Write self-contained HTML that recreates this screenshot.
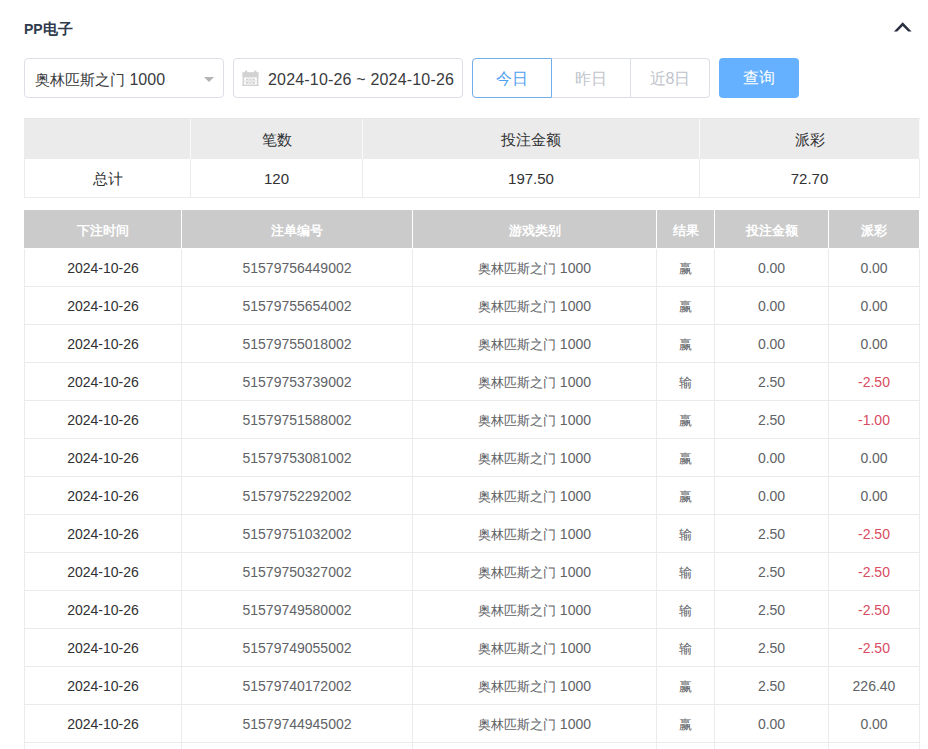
<!DOCTYPE html>
<html><head><meta charset="utf-8">
<style>
*{box-sizing:border-box;margin:0;padding:0}
html,body{width:928px;height:749px;overflow:hidden;background:#fff;font-family:"Liberation Sans",sans-serif;}
.abs{position:absolute}
.title{left:24px;top:19px;font-size:14px;font-weight:bold;color:#2f3a4d;line-height:20px}
.chev{left:892px;top:20px;width:22px;height:14px}
.sel{left:24px;top:58px;width:200px;height:40px;border:1px solid #dcdfe6;border-radius:4px;}
.sel .txt{position:absolute;left:10px;top:2px;line-height:38px;font-size:16px;color:#3a3b3e;white-space:nowrap}
.sel .arr{position:absolute;left:179px;top:18px;width:0;height:0;border-left:5px solid transparent;border-right:5px solid transparent;border-top:5px solid #b4b4b4}
.date{left:233px;top:58px;width:230px;height:40px;border:1px solid #dcdfe6;border-radius:4px;}
.date .txt{position:absolute;left:34px;top:2px;line-height:38px;font-size:16px;letter-spacing:0.18px;color:#3a3b3e;white-space:nowrap}
.date svg{position:absolute;left:8px;top:11px}
.rb{top:58px;height:40px;border:1px solid #dcdfe6;border-left:0;font-size:16px;line-height:40px;text-align:center;color:#c0c4cc;background:#fff}
.rb.on{border:1px solid #72aee8;color:#4fa0f0;border-radius:4px 0 0 4px}
.rb.last{border-radius:0 4px 4px 0}
.q{left:719px;top:58px;width:80px;height:40px;background:#66b1ff;border-radius:4px;color:#fff;font-size:16px;line-height:40px;text-align:center}
.cj{font-size:15px}
.sum{left:24px;top:118px;width:896px}
.sum .hd{display:flex;height:41px;background:#ebebeb;border-top:1px solid #e6e6e6}
.sum .hd div{height:40px;line-height:42px;text-align:center;font-size:15px;color:#303133;border-right:1px solid #fafafa}
.sum .bd{display:flex;height:39px}
.sum .bd div{height:39px;line-height:40px;text-align:center;font-size:15px;color:#303133;border-right:1px solid #ebebee;border-bottom:1px solid #ebebee}
.sum .s1{width:167px}.sum .s2{width:172px}.sum .s3{width:337px}.sum .s4{width:220px}
.sum .bd .s1{border-left:1px solid #ebebee}
.det{left:24px;top:210px;width:896px}
.det .hd{display:flex;height:39px;background:#fff}
.det .hd div{height:38px;line-height:41px;text-align:center;font-size:13px;font-weight:bold;color:#fff;background:#cbcbcb;border-right:1px solid #fff}
.det .hd .c6{border-right:1px solid #fff}
.tr{display:flex;height:38px}
.tr div{height:38px;line-height:39px;text-align:center;font-size:14px;color:#606266;border-right:1px solid #ebebee;border-bottom:1px solid #ebebee;white-space:nowrap}
.tr .c1{border-left:1px solid #ebebee}
.tr .dt{color:#303133}
.c1{width:158px}.c2{width:231px}.c3{width:244px}.c4{width:58px}.c5{width:114px}.c6{width:91px}
.det .hd .c1{width:158px}
.tr .cj{font-size:13px}
.red{color:#d84c62 !important}
</style></head><body>
<div class="abs title">PP<span style="font-size:15px">电子</span></div>
<svg class="abs chev" viewBox="0 0 22 14"><polygon points="10.7,2.3 1.9,11.6 5.3,11.6 10.7,5.9 16.2,11.6 19.6,11.6" fill="#2a3042"/></svg>
<div class="abs sel"><div class="txt"><span class="cj">奥林匹斯之门</span> 1000</div><div class="arr"></div></div>
<div class="abs date">
<svg width="17" height="17" viewBox="0 0 17 17"><g fill="#d2d2d2"><rect x="3" y="0.6" width="2.2" height="3.6"/><rect x="12.2" y="0.6" width="2.2" height="3.6"/><rect x="0.6" y="2.2" width="15.8" height="5.2"/><rect x="0.6" y="2.2" width="1.6" height="13.8"/><rect x="14.8" y="2.2" width="1.6" height="13.8"/><rect x="0.6" y="14.6" width="15.8" height="1.4"/><rect x="4" y="8.6" width="2" height="2"/><rect x="7.5" y="8.6" width="2" height="2"/><rect x="11" y="8.6" width="2" height="2"/><rect x="4" y="12" width="2" height="1.8"/><rect x="7.5" y="12" width="2" height="1.8"/><rect x="11" y="12" width="2" height="1.8"/></g><g fill="#e8e8e8"><rect x="2.2" y="10.6" width="12.6" height="1.4"/><rect x="6" y="7.4" width="1.5" height="7.2"/><rect x="9.5" y="7.4" width="1.5" height="7.2"/></g></svg>
<div class="txt">2024-10-26 ~ 2024-10-26</div></div>
<div class="abs rb on" style="left:472px;width:80px">今日</div>
<div class="abs rb" style="left:552px;width:79px">昨日</div>
<div class="abs rb last" style="left:631px;width:79px">近8日</div>
<div class="abs q">查询</div>

<div class="abs sum">
<div class="hd"><div class="s1"></div><div class="s2">笔数</div><div class="s3">投注金额</div><div class="s4">派彩</div></div>
<div class="bd"><div class="s1">总计</div><div class="s2">120</div><div class="s3">197.50</div><div class="s4">72.70</div></div>
</div>

<div class="abs det">
<div class="hd"><div class="c1">下注时间</div><div class="c2">注单编号</div><div class="c3">游戏类别</div><div class="c4">结果</div><div class="c5">投注金额</div><div class="c6">派彩</div></div>
<div class="tr"><div class="c1 dt">2024-10-26</div><div class="c2">51579756449002</div><div class="c3"><span class="cj">奥林匹斯之门</span> 1000</div><div class="c4"><span class="cj">赢</span></div><div class="c5">0.00</div><div class="c6">0.00</div></div>
<div class="tr"><div class="c1 dt">2024-10-26</div><div class="c2">51579755654002</div><div class="c3"><span class="cj">奥林匹斯之门</span> 1000</div><div class="c4"><span class="cj">赢</span></div><div class="c5">0.00</div><div class="c6">0.00</div></div>
<div class="tr"><div class="c1 dt">2024-10-26</div><div class="c2">51579755018002</div><div class="c3"><span class="cj">奥林匹斯之门</span> 1000</div><div class="c4"><span class="cj">赢</span></div><div class="c5">0.00</div><div class="c6">0.00</div></div>
<div class="tr"><div class="c1 dt">2024-10-26</div><div class="c2">51579753739002</div><div class="c3"><span class="cj">奥林匹斯之门</span> 1000</div><div class="c4"><span class="cj">输</span></div><div class="c5">2.50</div><div class="c6 red">-2.50</div></div>
<div class="tr"><div class="c1 dt">2024-10-26</div><div class="c2">51579751588002</div><div class="c3"><span class="cj">奥林匹斯之门</span> 1000</div><div class="c4"><span class="cj">赢</span></div><div class="c5">2.50</div><div class="c6 red">-1.00</div></div>
<div class="tr"><div class="c1 dt">2024-10-26</div><div class="c2">51579753081002</div><div class="c3"><span class="cj">奥林匹斯之门</span> 1000</div><div class="c4"><span class="cj">赢</span></div><div class="c5">0.00</div><div class="c6">0.00</div></div>
<div class="tr"><div class="c1 dt">2024-10-26</div><div class="c2">51579752292002</div><div class="c3"><span class="cj">奥林匹斯之门</span> 1000</div><div class="c4"><span class="cj">赢</span></div><div class="c5">0.00</div><div class="c6">0.00</div></div>
<div class="tr"><div class="c1 dt">2024-10-26</div><div class="c2">51579751032002</div><div class="c3"><span class="cj">奥林匹斯之门</span> 1000</div><div class="c4"><span class="cj">输</span></div><div class="c5">2.50</div><div class="c6 red">-2.50</div></div>
<div class="tr"><div class="c1 dt">2024-10-26</div><div class="c2">51579750327002</div><div class="c3"><span class="cj">奥林匹斯之门</span> 1000</div><div class="c4"><span class="cj">输</span></div><div class="c5">2.50</div><div class="c6 red">-2.50</div></div>
<div class="tr"><div class="c1 dt">2024-10-26</div><div class="c2">51579749580002</div><div class="c3"><span class="cj">奥林匹斯之门</span> 1000</div><div class="c4"><span class="cj">输</span></div><div class="c5">2.50</div><div class="c6 red">-2.50</div></div>
<div class="tr"><div class="c1 dt">2024-10-26</div><div class="c2">51579749055002</div><div class="c3"><span class="cj">奥林匹斯之门</span> 1000</div><div class="c4"><span class="cj">输</span></div><div class="c5">2.50</div><div class="c6 red">-2.50</div></div>
<div class="tr"><div class="c1 dt">2024-10-26</div><div class="c2">51579740172002</div><div class="c3"><span class="cj">奥林匹斯之门</span> 1000</div><div class="c4"><span class="cj">赢</span></div><div class="c5">2.50</div><div class="c6">226.40</div></div>
<div class="tr"><div class="c1 dt">2024-10-26</div><div class="c2">51579744945002</div><div class="c3"><span class="cj">奥林匹斯之门</span> 1000</div><div class="c4"><span class="cj">赢</span></div><div class="c5">0.00</div><div class="c6">0.00</div></div>
<div class="tr"><div class="c1 dt">2024-10-26</div><div class="c2">51579744000002</div><div class="c3"><span class="cj">奥林匹斯之门</span> 1000</div><div class="c4"><span class="cj">赢</span></div><div class="c5">0.00</div><div class="c6">0.00</div></div>
</div>
</body></html>
